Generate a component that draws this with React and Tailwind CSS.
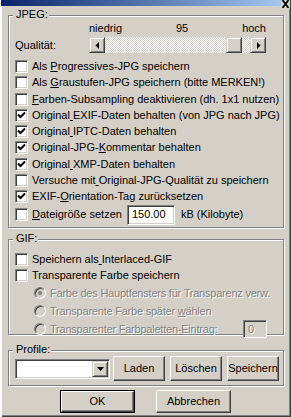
import React from 'react';

const raised =
  'border border-t-white border-l-white border-r-[#404040] border-b-[#404040] shadow-[inset_-1px_-1px_0_#808080]';
const raisedSmall =
  'border border-t-[#d4d0c8] border-l-[#d4d0c8] border-r-[#404040] border-b-[#404040] shadow-[inset_1px_1px_0_#fff,inset_-1px_-1px_0_#808080]';
const sunken =
  'border border-t-[#808080] border-l-[#808080] border-r-white border-b-white shadow-[inset_1px_1px_0_#404040,inset_-1px_-1px_0_#d4d0c8]';

const Box = ({ checked }) => (
  <div className={`w-[13px] h-[13px] shrink-0 bg-white flex items-center justify-center ${sunken}`}>
    {checked && (
      <svg width="9" height="9" viewBox="0 0 9 9">
        <path d="M1 3.5 L3.5 6 L8 1.5" stroke="#000" strokeWidth="2" fill="none" />
      </svg>
    )}
  </div>
);

const Check = ({ checked, children, h = 'h-[16.25px]' }) => (
  <div className={`flex items-center ${h}`}>
    <Box checked={checked} />
    <span className="ml-[4px] whitespace-nowrap">{children}</span>
  </div>
);

const Radio = ({ on, children, extra }) => (
  <div className="flex items-center h-[18px] pl-[19px]">
    <div
      className={`w-[12px] h-[12px] rounded-full shrink-0 bg-[#d4d0c8] flex items-center justify-center ${sunken}`}
    >
      {on && <div className="w-[4px] h-[4px] rounded-full bg-[#808080]" />}
    </div>
    <span className="ml-[4px] whitespace-nowrap tracking-[-0.22px] text-[#808080] [text-shadow:1px_1px_0_#fff]">
      {children}
    </span>
    {extra}
  </div>
);

const U = ({ children }) => <span className="underline underline-offset-[1px]">{children}</span>;

const Group = ({ label, className, children }) => (
  <div
    className={`relative w-[276px] border border-[#808080] shadow-[inset_1px_1px_0_#fff,1px_1px_0_#fff] ${className}`}
  >
    <span className="absolute left-[4px] top-[-8px] pl-[3px] pr-[1px] bg-[#d4d0c8] leading-[13px]">{label}</span>
    {children}
  </div>
);

const Arrow = ({ dir }) => (
  <svg width="4" height="7" viewBox="0 0 4 7">
    {dir === 'left' ? <polygon points="4,0 4,7 0.5,3.5" fill="#000" /> : <polygon points="0,0 0,7 3.5,3.5" fill="#000" />}
  </svg>
);

const Button = ({ children, w = 'w-[52px]', h = 'h-[25px]' }) => (
  <div className={`${w} ${h} bg-[#d4d0c8] flex items-center justify-center ${raised}`}>{children}</div>
);

export default function App() {
  return (
    <div className="relative w-[291px] h-[417px] bg-[#d4d0c8] overflow-hidden text-[11px] leading-[13px] text-black font-['Liberation_Sans',Arial,sans-serif] shadow-[inset_2px_0_0_#fff,inset_-1px_-1px_0_#404040,inset_-2px_-2px_0_#808080]">
      {/* title bar remnant */}
      <div className="relative h-[6px] ml-[1px] mr-[6px] bg-gradient-to-r from-[#0a246a] to-[#a6caf0]">
        <div className="absolute right-[-5px] top-0 w-[9px] h-[9px] bg-[#d4d0c8] flex items-start justify-center">
          <svg width="7" height="8" viewBox="0 0 7 8">
            <path d="M0.5 0 L6.5 8 M6.5 0 L0.5 8" stroke="#000" strokeWidth="1.8" />
          </svg>
        </div>
      </div>

      <div className="px-[8px] flex flex-col">
        <Group label="JPEG:" className="mt-[9px] h-[213px]">
          <div className="flex flex-col">
            <div className="mt-[6px] ml-[80px] w-[177px] h-[13px] flex justify-between">
              <span>niedrig</span>
              <span>95</span>
              <span>hoch</span>
            </div>
            <div className="mt-[2px] h-[16px] flex items-center">
              <span className="w-[80px] pl-[6px]">Qualität:</span>
              <div className="w-[177px] h-[16px] flex bg-[repeating-conic-gradient(#fff_0_25%,#d4d0c8_0_50%)] bg-[length:2px_2px]">
                <div className={`w-[16px] h-[16px] bg-[#d4d0c8] flex items-center justify-center ${raisedSmall}`}>
                  <Arrow dir="left" />
                </div>
                <div className="flex-1" />
                <div className={`w-[16px] h-[16px] bg-[#d4d0c8] ${raisedSmall}`} />
                <div className="w-[8px]" />
                <div className={`w-[16px] h-[16px] bg-[#d4d0c8] flex items-center justify-center pl-[1px] ${raisedSmall}`}>
                  <Arrow dir="right" />
                </div>
              </div>
            </div>
            <div className="mt-[5.4px] pl-[6px] flex flex-col">
              <Check>Als <U>P</U>rogressives-JPG speichern</Check>
              <Check>Als <U>G</U>raustufen-JPG speichern (bitte MERKEN!)</Check>
              <Check><U>F</U>arben-Subsampling deaktivieren (dh. 1x1 nutzen)</Check>
              <Check checked>Original<U> </U>EXIF-Daten behalten (von JPG nach JPG)</Check>
              <Check checked>Original<U> </U>IPTC-Daten behalten</Check>
              <Check checked>Original-JPG-<U>K</U>ommentar behalten</Check>
              <Check checked>Original<U> </U>XMP-Daten behalten</Check>
              <Check>Versuche mit<U> </U>Original-JPG-Qualität zu speichern</Check>
              <Check checked>EXIF-<U>O</U>rientation-Tag zurücksetzen</Check>
              <div className="flex items-center h-[20px]">
                <Box />
                <span className="ml-[4px] whitespace-nowrap"><U>D</U>ateigröße setzen</span>
                <div className={`ml-[5px] w-[48px] h-[20px] bg-white flex items-center pl-[4px] ${sunken}`}>150.00</div>
                <span className="ml-[6px] whitespace-nowrap">kB (Kilobyte)</span>
              </div>
            </div>
          </div>
        </Group>

        <Group label="GIF:" className="mt-[11px] h-[96px]">
          <div className="mt-[11px] pl-[6px] flex flex-col">
            <Check h="h-[16.5px]">Speichern als<U> </U>Interlaced-GIF</Check>
            <Check h="h-[16.5px]">Transparente Farbe speichern</Check>
            <Radio on>Farbe des Hauptfensters für Transparenz verw.</Radio>
            <Radio>Transparente Farbe später <U>w</U>ählen</Radio>
            <Radio
              extra={
                <div className={`ml-auto mr-[16px] w-[24px] h-[18px] bg-[#d4d0c8] flex items-center pl-[4px] text-[#808080] [text-shadow:1px_1px_0_#fff] ${sunken}`}>
                  0
                </div>
              }
            >
              <U>T</U>ransparenter Farbpaletten-Eintrag:
            </Radio>
          </div>
        </Group>

        <Group label="Profile:" className="mt-[15px] h-[36px]">
          <div className="mt-[5px] h-[25px] pl-[6px] flex items-center">
            <div className={`w-[95px] h-[20px] bg-white flex justify-end items-center pr-[1px] ${sunken}`}>
              <div className={`w-[16px] h-[16px] bg-[#d4d0c8] flex items-center justify-center ${raisedSmall}`}>
                <svg width="7" height="4" viewBox="0 0 7 4">
                  <polygon points="0,0 7,0 3.5,4" fill="#000" />
                </svg>
              </div>
            </div>
            <div className="ml-[3px] flex gap-[5px]">
              <Button>Laden</Button>
              <Button>Löschen</Button>
              <Button>Speichern</Button>
            </div>
          </div>
        </Group>

        <div className="mt-[4px] flex justify-center gap-[21px]">
          <div className="w-[75px] h-[23px] border border-black">
            <Button w="w-full" h="h-full">OK</Button>
          </div>
          <Button w="w-[75px]" h="h-[23px]">Abbrechen</Button>
        </div>
      </div>
    </div>
  );
}
